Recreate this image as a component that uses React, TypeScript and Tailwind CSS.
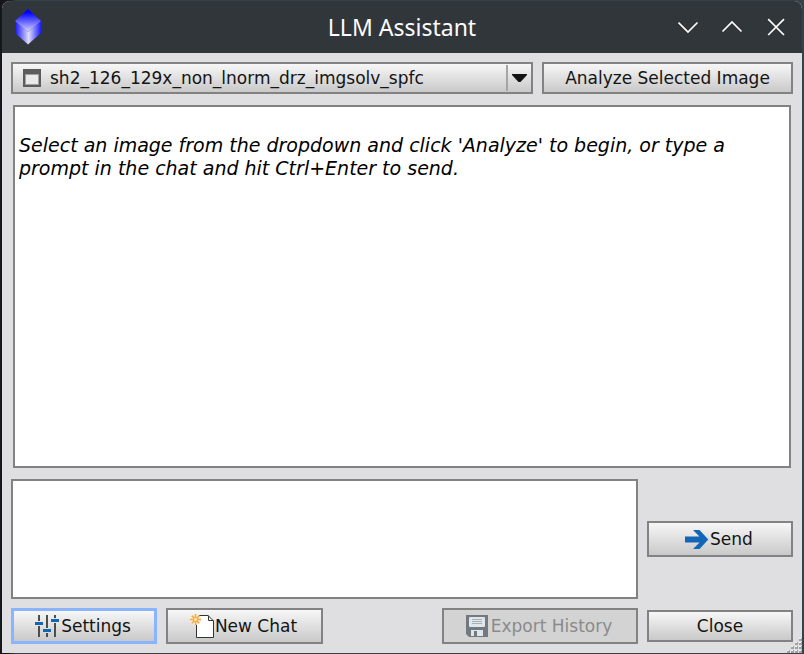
import type { ReactNode } from "react";

const face =
  "flex items-center justify-center border-2 border-[#828282] bg-linear-to-b from-[#f7f7f7] to-[#c9c9c9] whitespace-pre";

function Button({ className, children }: { className: string; children: ReactNode }) {
  return <button className={`${face} ${className}`}>{children}</button>;
}

function AppIcon() {
  return (
    <svg width="28" height="38" viewBox="0 0 28 38">
      <defs>
        <linearGradient id="top" x1="0" y1="0" x2="0" y2="1">
          <stop offset="0.15" stopColor="#0000ff" />
          <stop offset="1" stopColor="#d8d8ff" />
        </linearGradient>
        <linearGradient id="left" x1="0" y1="0" x2="1" y2="0">
          <stop offset="0" stopColor="#1414ff" />
          <stop offset="1" stopColor="#d0d0fa" />
        </linearGradient>
        <linearGradient id="right" x1="1" y1="0" x2="0" y2="0">
          <stop offset="0" stopColor="#1a1aff" />
          <stop offset="1" stopColor="#e6e6fa" />
        </linearGradient>
      </defs>
      <path d="M1 13 14 24V36.500L1 25Z" fill="url(#left)" />
      <path d="M27 13 14 24V36.500L27 25Z" fill="url(#right)" />
      <path d="M14 1 27 13 14 24 1 13Z" fill="url(#top)" />
    </svg>
  );
}

function WindowIcon() {
  return (
    <svg width="18" height="18" viewBox="0 0 18 18" shapeRendering="crispEdges">
      <path d="M0 0H18V18H0Z" fill="#5c5c5c" />
      <path d="M2 5H16V16H2Z" fill="#a0a0a0" />
      <path d="M3 6H15V15H3Z" fill="#eaeaea" />
    </svg>
  );
}

function SlidersIcon() {
  return (
    <svg width="24" height="22" viewBox="0 0 24 22" shapeRendering="crispEdges">
      <path d="M3 0H5V22H3ZM11 0H13V22H11ZM19 0H21V22H19Z" fill="#4d4d4d" />
      <path d="M3 6H5V11H3ZM11 13H13V18H11ZM19 3H21V8H19Z" fill="#e2e2e2" />
      <path d="M0 7H8V10H0ZM8 14H16V17H8ZM16 4H24V7H16Z" fill="#1266b8" />
    </svg>
  );
}

function NewFileIcon() {
  return (
    <svg width="24" height="24" viewBox="0 0 24 24">
      <path d="M6.500 1.500H18L23.500 7V23.500H6.500Z" fill="#fff" stroke="#333" />
      <path d="M18.500 1.500V6.500H23.500" fill="none" stroke="#333" />
      <circle cx="5.500" cy="5.500" r="5.500" fill="#eeeeee" />
      <path
        d="M5.500 0V11M0 5.500H11M1.800 1.800 9.200 9.200M9.200 1.800 1.800 9.200"
        stroke="#fba62c"
        strokeWidth="1.5"
      />
      <circle cx="5.500" cy="5.500" r="1.900" fill="#fff0cc" stroke="#fba62c" />
    </svg>
  );
}

function FloppyIcon() {
  return (
    <svg width="22" height="22" viewBox="0 0 22 22">
      <path d="M0 0H22V22H3L0 19Z" fill="#72797f" />
      <rect x="3" y="2" width="16" height="10" rx="1" fill="#dfe7ec" />
      <path d="M6 4.500H16M6 6.500H16M6 8.500H16" stroke="#a9b0b5" />
      <path d="M5 15H17V21H5Z" fill="#dfe7ec" />
      <path d="M8 16H11V21H8Z" fill="#72797f" />
    </svg>
  );
}

function ArrowIcon() {
  return (
    <svg width="24" height="19" viewBox="0 0 24 19">
      <path d="M8 0H14.500L23.300 9.500 14.500 19H8L14.500 12.400H0V6.600H14.500Z" fill="#1266b8" />
    </svg>
  );
}

function TitleBar() {
  return (
    <header className="flex h-[52px] shrink-0 items-center bg-[#31363b] text-[#fcfcfc]">
      <div className="flex w-[200px] pl-[12px]">
        <AppIcon />
      </div>
      <h1 className="flex-1 text-center font-['Noto_Sans','Open_Sans',sans-serif] text-[23px] leading-[52px]">
        LLM Assistant
      </h1>
      <div className="flex w-[200px] justify-end pr-[16px]">
        <svg width="108" height="20" viewBox="0 0 108 20" fill="none" stroke="#fcfcfc" strokeWidth="1.700">
          <path d="M0.500 5.500 10 15 19.500 5.500M44.500 14.500 54 5 63.500 14.500M90.200 2.200 106 18M106 2.200 90.200 18" />
        </svg>
      </div>
    </header>
  );
}

export default function App() {
  return (
    <div className="h-[654px] w-[804px] overflow-hidden bg-linear-to-r from-[#15171c] from-1% to-[#36414a] to-2% pt-px pr-[2px] pb-px pl-[2px] font-['DejaVu_Sans',sans-serif] text-[17px] leading-[22px] text-[#141414]">
      <div className="relative flex h-[652px] flex-col overflow-hidden rounded-t-[8px] bg-[#dfdfe1]">
        <TitleBar />
        <main className="flex flex-col px-[9px] pt-[9px]">
          <div className="flex gap-[9px]">
            <div className={`${face} h-[32px] w-[522px]`}>
              <div className="flex flex-1 items-center gap-[9px] pl-[10px]">
                <WindowIcon />
                <span>sh2_126_129x_non_lnorm_drz_imgsolv_spfc</span>
              </div>
              <div className="flex h-[26px] w-[25px] items-center border-l-2 border-[#a5a5a5] pl-[4px]">
                <svg width="15" height="8" viewBox="0 0 15 8">
                  <path d="M0 0H15V1L8.500 8H6.500L0 1Z" fill="#141414" />
                </svg>
              </div>
            </div>
            <Button className="h-[32px] w-[251px]">Analyze Selected Image</Button>
          </div>
          <section className="mt-[11px] ml-[2px] h-[363px] w-[778px] border-2 border-[#828282] bg-white pt-[27px] pl-[4px] text-[19px] leading-[23px] whitespace-pre text-black italic">
            <p>Select an image from the dropdown and click 'Analyze' to begin, or type a</p>
            <p>prompt in the chat and hit Ctrl+Enter to send.</p>
          </section>
          <div className="mt-[11px] flex items-center gap-[9px]">
            <textarea className="block h-[120px] w-[627px] resize-none border-2 border-[#828282] bg-white outline-none" />
            <Button className="h-[36px] w-[146px]">
              <ArrowIcon />
              <span className="pl-px pr-[2px]">Send</span>
            </Button>
          </div>
          <footer className="mt-[9px] flex items-center">
            <button className="flex h-[36px] w-[146px] items-center justify-center border-[3px] border-[#8ab4ff] bg-linear-to-b from-[#f7f7f7] to-[#c9c9c9]">
              <SlidersIcon />
              <span className="pr-[2px] pl-[2px]">Settings</span>
            </button>
            <Button className="ml-[9px] h-[36px] w-[157px]">
              <NewFileIcon />
              <span className="pr-[2px] pl-px">New Chat</span>
            </Button>
            <button className="ml-[119px] flex h-[36px] w-[196px] items-center justify-center border-2 border-[#828282] bg-[#d3d3d3] text-[#8a8a8a]">
              <FloppyIcon />
              <span className="pr-[2px] pl-[3px]">Export History</span>
            </button>
            <Button className="ml-[9px] h-[32px] w-[146px]">Close</Button>
          </footer>
        </main>
        <svg className="absolute right-0 bottom-0" width="16" height="16" viewBox="0 0 16 16" shapeRendering="crispEdges">
          <path
            d="M13 1h3v3h-3zM9 5h3v3h-3zM13 5h3v3h-3zM5 9h3v3h-3zM9 9h3v3h-3zM13 9h3v3h-3zM1 13h3v3h-3zM5 13h3v3h-3zM9 13h3v3h-3zM13 13h3v3h-3z"
            fill="#a2a2a2"
          />
          <path
            d="M13 1h2v1h-2zM9 5h2v1h-2zM13 5h2v1h-2zM5 9h2v1h-2zM9 9h2v1h-2zM13 9h2v1h-2zM1 13h2v1h-2zM5 13h2v1h-2zM9 13h2v1h-2zM13 13h2v1h-2z"
            fill="#f4f4f4"
          />
        </svg>
      </div>
    </div>
  );
}
